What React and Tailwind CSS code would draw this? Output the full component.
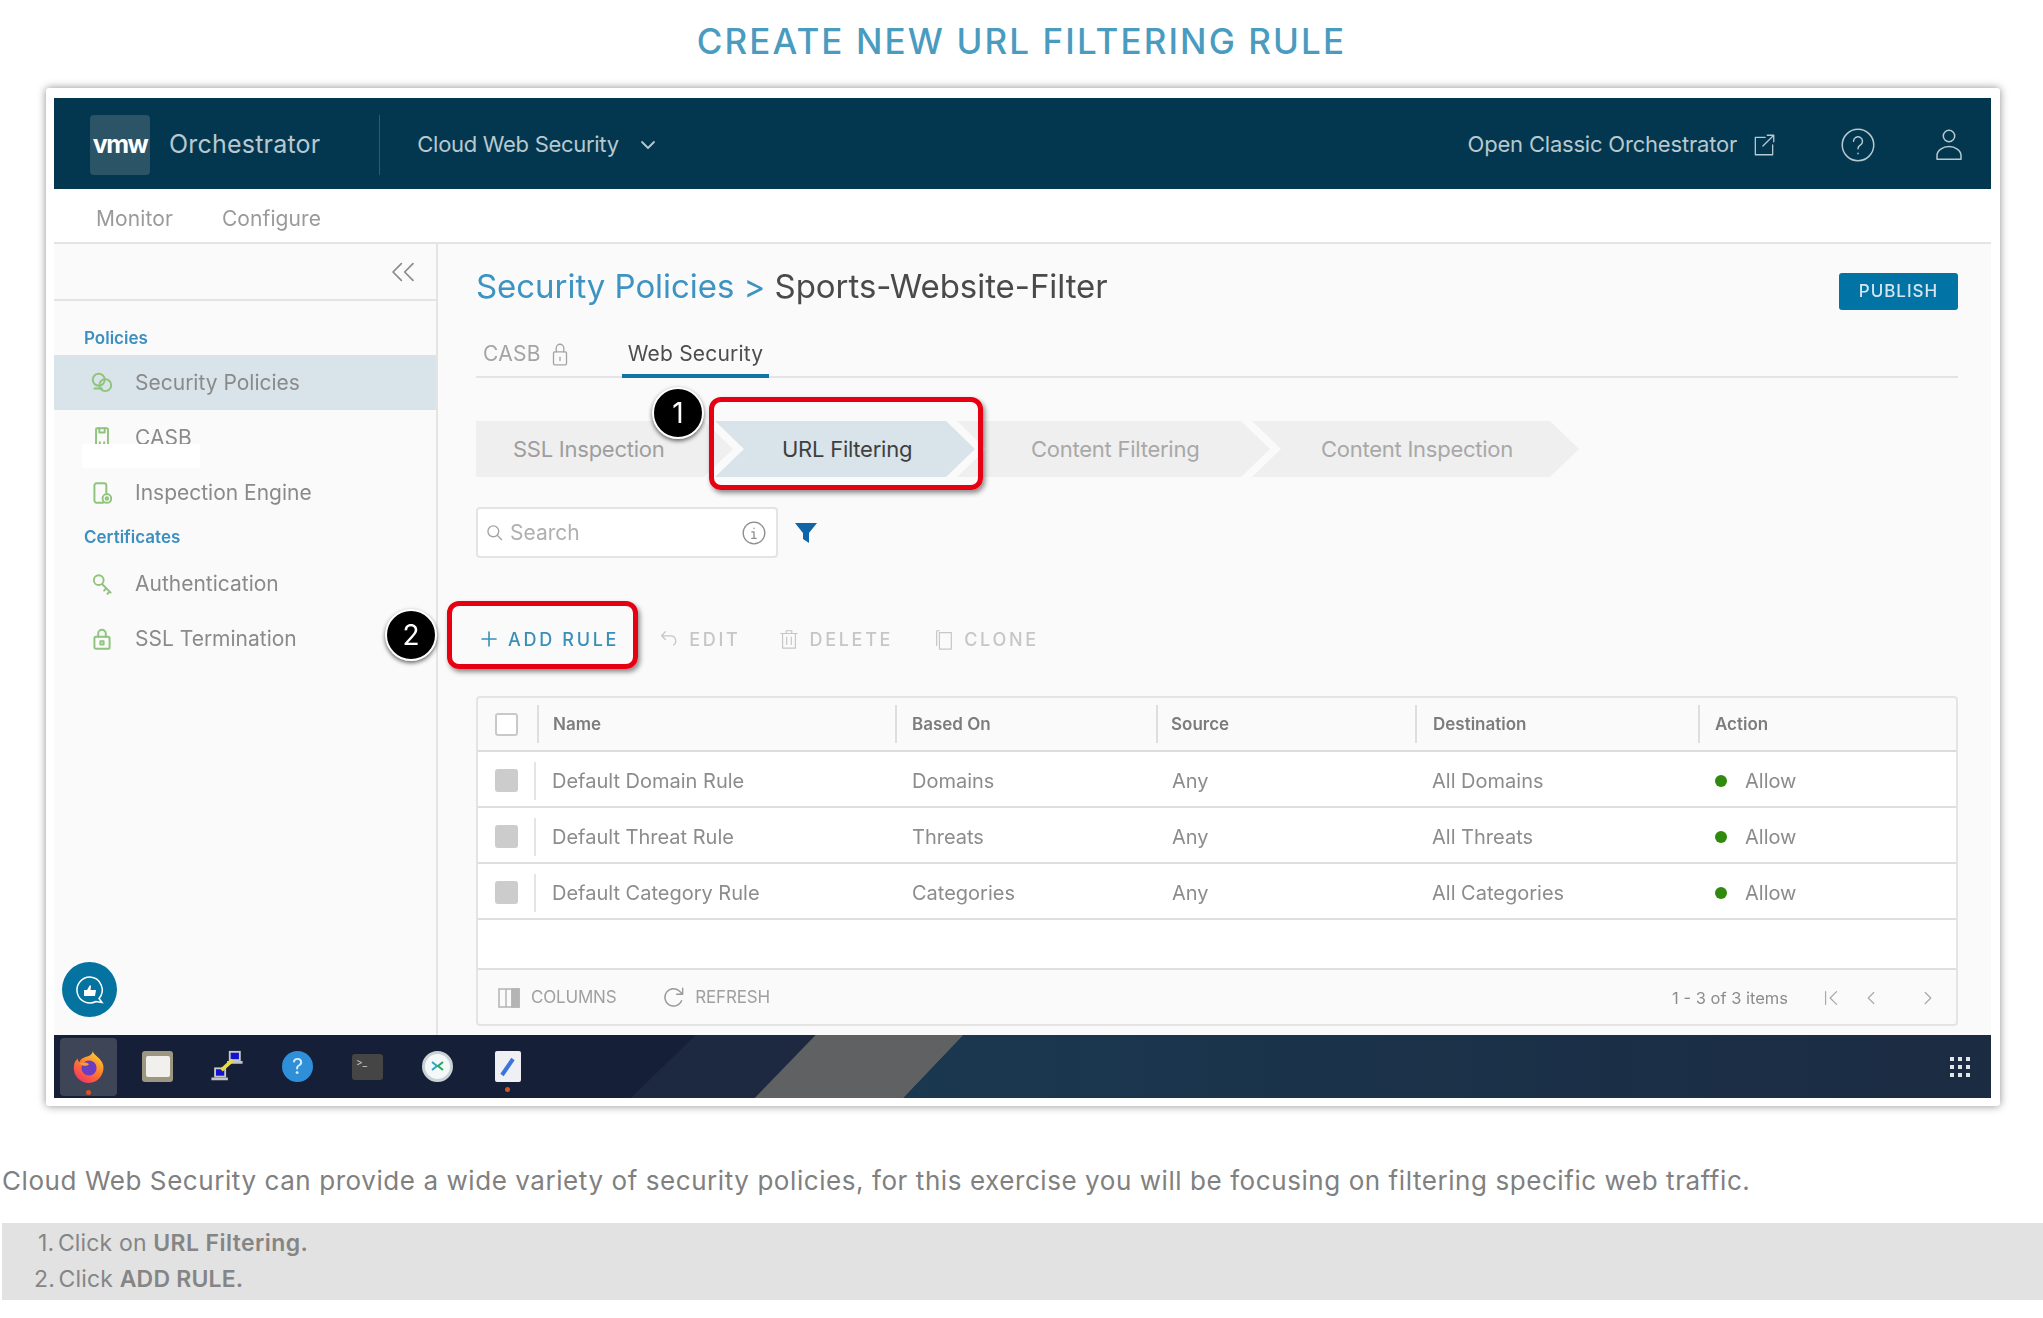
import { ChevronDown, ChevronLeft, ChevronRight, ChevronsLeft, Plus } from 'lucide-react';

const font = "font-['Inter','Liberation_Sans',sans-serif]";

function LineIcon({ className, size = 24, children, view = '0 0 24 24', width = 1.3 }) {
  return (
    <svg className={className} width={size} height={size} viewBox={view} fill="none" stroke="currentColor" strokeWidth={width} strokeLinecap="round" strokeLinejoin="round">
      {children}
    </svg>
  );
}

const sideIcons = {
  policies: (
    <>
      <circle cx="9" cy="9" r="5.5" />
      <circle cx="15" cy="14" r="5.5" />
      <path d="M5 17h7" />
    </>
  ),
  casb: (
    <>
      <rect x="6.5" y="3" width="11" height="18" rx="1" />
      <path d="M9.5 3v4h5V3M10 21v-5M14 21v-5" />
    </>
  ),
  engine: (
    <>
      <path d="M13 21H7a2 2 0 0 1-2-2V5a2 2 0 0 1 2-2h7a2 2 0 0 1 2 2v7" />
      <circle cx="16.5" cy="17" r="4" />
      <circle cx="16.5" cy="17" r="1.2" />
    </>
  ),
  auth: (
    <>
      <circle cx="9" cy="8.5" r="4.5" />
      <path d="M12 12l8 8M16 16l-2 2M19 19l-2 2" />
    </>
  ),
  ssl: (
    <>
      <rect x="5" y="10" width="14" height="11" rx="1.5" />
      <path d="M8.5 10V7a3.5 3.5 0 0 1 7 0v3" />
      <rect x="10.5" y="14" width="3" height="3" />
    </>
  ),
};

function SideItem({ icon, label, active }) {
  return (
    <div className={`flex h-[55px] items-center pl-[35px] text-[21px] text-[#8a8a8a] ${active ? 'bg-[#d8e3ea]' : ''}`}>
      <LineIcon className="w-[26px] text-[#8fc47c]" size={26} width={1.8}>
        {sideIcons[icon]}
      </LineIcon>
      <span className="ml-[20px]">{label}</span>
    </div>
  );
}

function Step({ label, className, tone }) {
  return (
    <div className={`flex h-[56px] shrink-0 items-center text-[22px] tracking-[-0.25px] ${tone} ${className}`}>{label}</div>
  );
}

function ToolButton({ icon, label, gap = 'ml-[9px]', className = 'text-[#c6c6c6]' }) {
  return (
    <div className={`flex items-center ${className}`}>
      {icon}
      <span className={`${gap} text-[18px] font-medium tracking-[2.7px]`}>{label}</span>
    </div>
  );
}

const rows = [
  ['Default Domain Rule', 'Domains', 'Any', 'All Domains'],
  ['Default Threat Rule', 'Threats', 'Any', 'All Threats'],
  ['Default Category Rule', 'Categories', 'Any', 'All Categories'],
];

const tableCols = 'grid grid-cols-[59px_358px_261px_259px_283px_1fr]';

function HeadCell({ children, pad }) {
  return (
    <div className="flex h-full items-center">
      <div className="h-[38px] w-[2px] bg-[#dedede]" />
      <span className={`${pad} pt-[1px] text-[17px] font-semibold text-[#7c7c7c]`}>{children}</span>
    </div>
  );
}

function Table() {
  return (
    <div className="mt-[37px] flex h-[330px] flex-col overflow-hidden rounded-[4px] border-2 border-[#e4e4e4] bg-[#fafafa]">
      <div className={`${tableCols} h-[54px] shrink-0 border-b-2 border-[#dcdcdc]`}>
        <div className="flex items-center justify-between pl-[17px]">
          <div className="h-[23px] w-[23px] rounded-[3px] border-2 border-[#c9c9c9] bg-white" />
        </div>
        <HeadCell pad="pl-[14px]">Name</HeadCell>
        <HeadCell pad="pl-[15px]">Based On</HeadCell>
        <HeadCell pad="pl-[13px]">Source</HeadCell>
        <HeadCell pad="pl-[16px]">Destination</HeadCell>
        <HeadCell pad="pl-[15px]">Action</HeadCell>
      </div>
      {rows.map((r) => (
        <div key={r[0]} className={`${tableCols} h-[56px] shrink-0 border-b-2 border-[#dfdfdf] bg-white pt-[3px] text-[20px] text-[#8c8c8c]`}>
          <div className="flex items-center justify-between pl-[17px]">
            <div className="h-[23px] w-[23px] rounded-[3px] bg-[#cccccc]" />
            <div className="mr-[1px] h-[38px] w-[2px] bg-[#e4e4e4]" />
          </div>
          <div className="flex items-center pl-[15px]">{r[0]}</div>
          <div className="flex items-center pl-[17px]">{r[1]}</div>
          <div className="flex items-center pl-[16px]">{r[2]}</div>
          <div className="flex items-center pl-[17px]">{r[3]}</div>
          <div className="flex items-center pl-[17px]">
            <span className="h-[12px] w-[12px] rounded-full bg-[#2f8a0e]" />
            <span className="ml-[18px]">Allow</span>
          </div>
        </div>
      ))}
      <div className="h-[50px] shrink-0 border-b-2 border-[#dfdfdf] bg-white" />
      <div className="flex flex-1 items-center pl-[20px] pr-[17px] pt-[2px] text-[17px] tracking-[-0.2px] text-[#a0a0a0]">
        <svg width="22" height="20" viewBox="0 0 22 20" className="text-[#b4b4b4]" fill="none" stroke="currentColor" strokeWidth="1.5">
          <rect x="1" y="1" width="20" height="18" />
          <path d="M8 1v18M14 1v18" />
          <rect x="14" y="1" width="7" height="18" fill="currentColor" />
        </svg>
        <span className="ml-[11px]">COLUMNS</span>
        <LineIcon className="ml-[45px] text-[#9a9a9a]" size={26} width={1.3}>
          <path d="M19 14.5A8 8 0 1 1 17.5 6L20 8.5M20 3v5.5h-5.5" />
        </LineIcon>
        <span className="ml-[8px]">REFRESH</span>
        <span className="ml-auto text-[16.5px] tracking-normal text-[#8c8c8c]">1 - 3 of 3 items</span>
        <LineIcon className="ml-[33px] text-[#a8a8a8]" size={22}>
          <path d="M5 5v14M17 5l-7 7 7 7" />
        </LineIcon>
        <ChevronLeft className="ml-[17px] text-[#a8a8a8]" size={22} strokeWidth={1.3} />
        <ChevronRight className="ml-[35px] text-[#a8a8a8]" size={22} strokeWidth={1.3} />
      </div>
    </div>
  );
}

function FirefoxIcon() {
  return (
    <svg width="34" height="34" viewBox="0 0 36 36">
      <defs>
        <linearGradient id="ff" x1="0.8" y1="0" x2="0.2" y2="1">
          <stop offset="0" stopColor="#ffd43a" />
          <stop offset="0.5" stopColor="#ff7a2b" />
          <stop offset="1" stopColor="#f0306a" />
        </linearGradient>
      </defs>
      <path d="M22 1c1 5 9 7 11 15 2 10-6 19-15 19C8 35 1 27 2 17c.4-4 2-6 4-8 0 2 1 3 2 4 1-4 5-5 8-6 3-1 6-3 6-6z" fill="url(#ff)" />
      <circle cx="18" cy="19" r="8" fill="#6b3cc4" />
      <path d="M8 14c4-2 8-1 10 1-2 2-6 3-10-1z" fill="#ff9b2e" />
    </svg>
  );
}

function NetworkIcon() {
  return (
    <svg width="32" height="33" viewBox="0 0 34 36">
      <rect x="19" y="1" width="13" height="11" fill="#c8c8c8" />
      <rect x="21" y="3" width="9" height="7" fill="#1212d0" />
      <rect x="17" y="12" width="17" height="3" fill="#c4c4c4" />
      <rect x="3" y="19" width="13" height="11" fill="#c8c8c8" />
      <rect x="5" y="21" width="9" height="7" fill="#1212d0" />
      <rect x="0" y="30" width="18" height="3" fill="#c4c4c4" />
      <path d="M11 22L23 11" stroke="#e8dc3c" strokeWidth="4" />
    </svg>
  );
}

function Taskbar() {
  return (
    <div className="relative flex h-[63px] shrink-0 items-center overflow-hidden bg-[#151f38] pl-[6px] pr-[21px]">
      <svg className="absolute inset-0 h-full w-full" viewBox="0 0 1938 63" preserveAspectRatio="none">
        <defs>
          <linearGradient id="tealbar" x1="0" y1="0" x2="1" y2="0">
            <stop offset="0" stopColor="#1a3850" />
            <stop offset="1" stopColor="#1b2b42" />
          </linearGradient>
        </defs>
        <polygon points="642,0 762,0 701,63 577,63" fill="#1d2841" />
        <polygon points="762,0 910,0 850,63 701,63" fill="#5f6163" />
        <polygon points="910,0 1938,0 1938,63 850,63" fill="url(#tealbar)" />
      </svg>
      <div className="relative flex h-[58px] w-[57px] items-center justify-center rounded-[4px] bg-[#3d4557]">
        <FirefoxIcon />
        <span className="absolute bottom-[1px] left-[26px] h-[5px] w-[5px] rounded-full bg-[#d9531e]" />
      </div>
      <div className="relative ml-[25px] flex h-[31px] w-[31px] items-center justify-center rounded-[3px] bg-[#9d9680]">
        <div className="h-[21px] w-[24px] rounded-[2px] bg-[#f1f0ec]" />
      </div>
      <div className="relative ml-[36px] flex w-[36px] justify-center">
        <NetworkIcon />
      </div>
      <div className="relative ml-[37px] flex h-[31px] w-[31px] items-center justify-center rounded-full bg-[#2f8fd8] text-[22px] text-[#d8ecfa]">?</div>
      <div className="relative ml-[39px] flex h-[26px] w-[31px] items-start rounded-[3px] bg-[#454545] pl-[4px] pt-[1px] text-[10px] leading-[14px] text-[#c8c8c8]">&gt;_</div>
      <div className="relative ml-[39px] flex h-[31px] w-[31px] items-center justify-center rounded-full border-[3px] border-[#c9d3d6] bg-[#f4f8f8]">
        <svg width="17" height="17" viewBox="0 0 17 17" fill="none" strokeWidth="2">
          <path d="M3 4l5 4-5 4" stroke="#2aa6c8" />
          <path d="M14 4L9 8l5 4" stroke="#25a85f" />
        </svg>
      </div>
      <div className="relative ml-[42px] flex h-[31px] w-[26px] items-center justify-center rounded-[2px] bg-[#eef0f4]">
        <svg width="18" height="24" viewBox="0 0 18 24" fill="none">
          <path d="M3 20L14 4" stroke="#3a74dc" strokeWidth="4" />
        </svg>
        <span className="absolute bottom-[-10px] left-[10px] h-[5px] w-[5px] rounded-full bg-[#d9531e]" />
      </div>
      <div className="relative ml-auto grid grid-cols-3 gap-[4px]">
        {Array.from({ length: 9 }).map((_, i) => (
          <span key={i} className="h-[4px] w-[4px] bg-[#e4e7ea]" />
        ))}
      </div>
    </div>
  );
}

function Window() {
  return (
    <div className={`${font} relative mx-[46px] h-[1018px] w-[1954px] rounded-[3px] bg-white pb-[8px] pl-[8px] pr-[9px] pt-[10px] shadow-[0_0_9px_rgba(0,0,0,0.45)]`}>
      <div className="flex h-full flex-col blur-[0.5px]">
        {/* Top bar */}
        <div className="flex h-[91px] shrink-0 items-center bg-[#03374f] pl-[36px] pr-[24px] pt-[2px] text-[#b8c8cf]">
          <div className="flex h-[60px] w-[60px] items-center justify-center rounded-[4px] bg-[#2b5467] text-[25px] font-bold tracking-[-1.5px] text-white">
            vmw
          </div>
          <span className="ml-[19px] text-[25px] tracking-[0.2px]">Orchestrator</span>
          <div className="ml-[59px] h-[60px] w-[1px] bg-[#33596c]" />
          <span className="ml-[37px] text-[22px] tracking-[-0.3px]">Cloud Web Security</span>
          <ChevronDown className="ml-[17px]" size={24} strokeWidth={1.8} />
          <span className="ml-auto text-[22px] tracking-[-0.2px]">Open Classic Orchestrator</span>
          <LineIcon className="ml-[14px]" size={26} width={1.2}>
            <path d="M13 5H4v16h16v-9M11 13L21 3M15 3h6v6" />
          </LineIcon>
          <LineIcon className="ml-[63px]" size={36} width={1}>
            <circle cx="12" cy="12" r="10.5" />
            <path d="M9 9.5a3 3 0 1 1 4.5 2.6c-1 .6-1.5 1.3-1.5 2.4M12 17.5v.3" />
          </LineIcon>
          <LineIcon className="ml-[55px]" size={36} width={1}>
            <circle cx="12" cy="6" r="3.8" />
            <path d="M4 21.5v-2.5c0-3.5 4-6 8-6s8 2.500 8 6v2.500z" />
          </LineIcon>
        </div>

        {/* Sub nav */}
        <div className="flex h-[55px] shrink-0 items-center border-b-2 border-[#e4e4e4] pl-[42px] pt-[7px] text-[21px] text-[#9a9a9a]">
          <span className="tracking-[0.1px]">Monitor</span>
          <span className="ml-[49px] tracking-[0.1px]">Configure</span>
        </div>

        <div className="flex min-h-0 flex-1 bg-[#fafafa]">
          {/* Sidebar */}
          <aside className="relative flex w-[384px] shrink-0 flex-col border-r-2 border-[#e4e4e4]">
            <div className="flex h-[57px] shrink-0 items-center justify-end border-b-2 border-[#e4e4e4] pr-[13px] text-[#8a8a8a]">
              <ChevronsLeft size={40} strokeWidth={1} />
            </div>
            <div className="flex h-[54px] shrink-0 items-end pb-[4px] pl-[30px] text-[17px] font-semibold text-[#3d8fc0]">Policies</div>
            <SideItem icon="policies" label="Security Policies" active />
            <SideItem icon="casb" label="CASB" />
            <SideItem icon="engine" label="Inspection Engine" />
            <div className="flex h-[36px] shrink-0 items-center pl-[30px] text-[17px] font-semibold text-[#3d8fc0]">Certificates</div>
            <SideItem icon="auth" label="Authentication" />
            <SideItem icon="ssl" label="SSL Termination" />
            <div className="absolute left-[28px] top-[200px] h-[24px] w-[118px] bg-white" />
            <button className="absolute bottom-[18px] left-[8px] flex h-[55px] w-[55px] items-center justify-center rounded-full bg-[#04739f] text-white">
              <svg width="36" height="36" viewBox="0 0 36 36" fill="none" stroke="currentColor" strokeWidth="1.5">
                <path d="M18 5a13 13 0 1 0 6 24.500l6 1-3-4A13 13 0 0 0 18 5z" />
                <path d="M12 18h3v6h-3zM15 18l3-5 1 1-.5 4H24l-1 6h-8" fill="currentColor" stroke="none" />
              </svg>
            </button>
          </aside>

          {/* Main */}
          <main className="min-w-0 flex-1 pl-[38px] pr-[33px]">
            <div className="flex h-[89px] items-start justify-between pt-[21px]">
              <h1 className="text-[33px] leading-[43px] tracking-[-0.05px]">
                <span className="text-[#3d93c2]">Security Policies &gt; </span>
                <span className="text-[#4a4a4a]">Sports-Website-Filter</span>
              </h1>
              <button className="mt-[8px] flex h-[37px] w-[119px] items-center justify-center rounded-[3px] bg-[#0273a5] text-[17px] font-medium tracking-[1px] text-[#d5e6ee]">
                PUBLISH
              </button>
            </div>

            <div className="flex h-[45px] items-stretch border-b-2 border-[#e4e4e4]">
              <div className="flex w-[146px] items-center pl-[7px] pb-[2px] text-[21px] tracking-[0.3px] text-[#a4a4a4]">
                CASB
                <LineIcon className="ml-[6px]" size={26} width={1.2}>
                  <rect x="6" y="10" width="12" height="12" rx="1" />
                  <path d="M8.500 10V6.500a3.500 3.500 0 0 1 7 0V10M12 15v3" />
                </LineIcon>
              </div>
              <div className="-mb-[2px] flex w-[147px] items-center justify-center border-b-[4px] border-[#0f75a8] text-[21px] tracking-[0.2px] text-[#4d4d4d]">
                Web Security
              </div>
            </div>

            <div className="mt-[43px] flex">
              <Step label="SSL Inspection" tone="bg-[#efefef] text-[#9e9e9e]" className="w-[257px] pl-[37px] [clip-path:polygon(0_0,228px_0,100%_50%,228px_100%,0_100%)]" />
              <Step label="URL Filtering" tone="bg-[#d8e3ea] text-[#3f3f3f]" className="-ml-[18px] w-[260px] pl-[67px] [clip-path:polygon(0_0,231px_0,100%_50%,231px_100%,0_100%,29px_50%)]" />
              <Step label="Content Filtering" tone="bg-[#efefef] text-[#a8a8a8]" className="-ml-[18px] w-[313px] pl-[74px] [clip-path:polygon(0_0,284px_0,100%_50%,284px_100%,0_100%,29px_50%)]" />
              <Step label="Content Inspection" tone="bg-[#efefef] text-[#a8a8a8]" className="-ml-[18px] w-[327px] pl-[69px] [clip-path:polygon(0_0,298px_0,100%_50%,298px_100%,0_100%,29px_50%)]" />
            </div>

            <div className="mt-[30px] flex items-center">
              <div className="flex h-[51px] w-[302px] items-center rounded-[4px] border-2 border-[#e4e4e4] bg-white pl-[7px] pr-[9px] text-[21px] text-[#b0b0b0]">
                <LineIcon className="text-[#a4a4a4]" size={20} width={1.6}>
                  <circle cx="10" cy="10" r="6.500" />
                  <path d="M15 15l5 5" />
                </LineIcon>
                <span className="ml-[5px]">Search</span>
                <LineIcon className="ml-auto text-[#8c8c8c]" size={26} width={1.2}>
                  <circle cx="12" cy="12" r="10" />
                  <path d="M10 11h2v6M10 17h4M12 7.500v.3" />
                </LineIcon>
              </div>
              <svg className="ml-[17px]" width="22" height="22" viewBox="0 0 22 22">
                <path d="M0 1h22l-8 10v10l-6-4v-6z" fill="#0f65a8" />
              </svg>
            </div>

            <div className="mt-[61px] flex h-[40px] items-center pl-[2px]">
              <ToolButton
                className="font-semibold text-[#3a8fb8]"
                gap="ml-[7px]"
                icon={<Plus className="-ml-[1px]" size={24} strokeWidth={1.6} />}
                label="ADD RULE"
              />
              <ToolButton
                className="ml-[39px] text-[#c6c6c6]"
                icon={
                  <LineIcon size={22} width={1.4}>
                    <path d="M8 4L4 8.500l4 4M4 8.500h10a5.500 5.500 0 0 1 3 10" />
                  </LineIcon>
                }
                label="EDIT"
              />
              <ToolButton
                className="ml-[38px] text-[#c6c6c6]"
                icon={
                  <LineIcon size={22} width={1.3}>
                    <path d="M3 6h18M9 6V3h6v3M5 6v16h14V6M9.500 10v8M14.500 10v8" />
                  </LineIcon>
                }
                label="DELETE"
              />
              <ToolButton
                className="ml-[40px] text-[#c6c6c6]"
                icon={
                  <LineIcon size={22} width={1.3}>
                    <path d="M7 3h-3v16" />
                    <rect x="7" y="5" width="13" height="18" />
                  </LineIcon>
                }
                label="CLONE"
              />
            </div>

            <Table />
          </main>
        </div>

        <Taskbar />
      </div>

      {/* Callouts */}
      <div className="absolute left-[663px] top-[309px] h-[93px] w-[274px] rounded-[12px] border-[5px] border-[#e60012] shadow-[2px_3px_5px_rgba(0,0,0,0.45)]" />
      <div className="absolute left-[401px] top-[513px] h-[68px] w-[191px] rounded-[12px] border-[5px] border-[#e60012] shadow-[2px_3px_5px_rgba(0,0,0,0.45)]" />
      <div className="absolute left-[606px] top-[299px] flex h-[52px] w-[52px] items-center justify-center rounded-full border-2 border-white bg-black text-[28px] text-white shadow-[0_2px_4px_rgba(0,0,0,0.6)]">1</div>
      <div className="absolute left-[339px] top-[521px] flex h-[52px] w-[52px] items-center justify-center rounded-full border-2 border-white bg-black text-[28px] text-white shadow-[0_2px_4px_rgba(0,0,0,0.6)]">2</div>
    </div>
  );
}

export default function App() {
  return (
    <div className={`${font} h-[1318px] w-[2043px] overflow-hidden bg-white`}>
      <div className="flex h-[88px] items-start justify-center pt-[20px]">
        <h1 className="text-[35px] font-medium leading-[42px] tracking-[2.1px] text-[#4a9bc0]">CREATE NEW URL FILTERING RULE</h1>
      </div>
      <Window />
      <p className="ml-[2px] mt-[58px] text-[26px] leading-[34px] tracking-[0.57px] text-[#808080]">
        Cloud Web Security can provide a wide variety of security policies, for this exercise you will be focusing on filtering specific web traffic.
      </p>
      <ol className="ml-[2px] mt-[25px] h-[77px] bg-[#e2e2e2] pt-[2px] text-[23px] leading-[36px] tracking-[0.15px] text-[#858585]">
        <li className="pl-[36px]"><span className="mr-[-3px]">1.</span> Click on <b className="font-semibold tracking-[0.4px]">URL Filtering.</b></li>
        <li className="pl-[32px]"><span className="mr-[-3px]">2.</span> Click <b className="font-semibold tracking-[0.2px]">ADD RULE.</b></li>
      </ol>
    </div>
  );
}
